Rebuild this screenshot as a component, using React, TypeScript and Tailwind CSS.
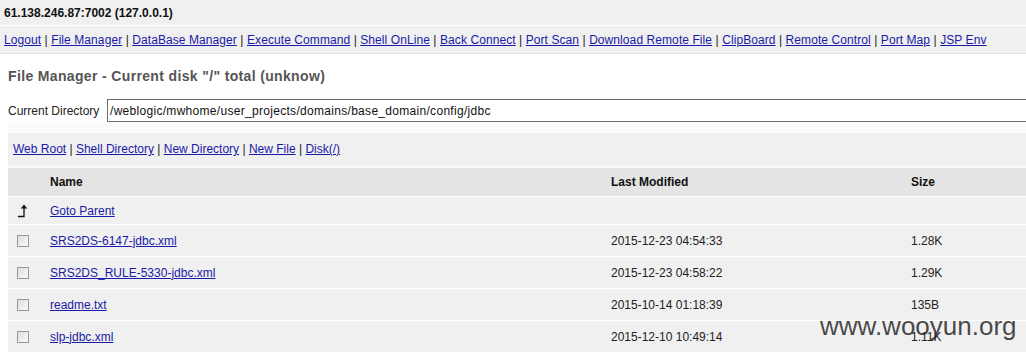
const navLinks = [
  "Logout",
  "File Manager",
  "DataBase Manager",
  "Execute Command",
  "Shell OnLine",
  "Back Connect",
  "Port Scan",
  "Download Remote File",
  "ClipBoard",
  "Remote Control",
  "Port Map",
  "JSP Env",
];

const actions = ["Web Root", "Shell Directory", "New Directory", "New File", "Disk(/)"];

const files = [
  { name: "SRS2DS-6147-jdbc.xml", modified: "2015-12-23 04:54:33", size: "1.28K" },
  { name: "SRS2DS_RULE-5330-jdbc.xml", modified: "2015-12-23 04:58:22", size: "1.29K" },
  { name: "readme.txt", modified: "2015-10-14 01:18:39", size: "135B" },
  { name: "slp-jdbc.xml", modified: "2015-12-10 10:49:14", size: "1.11K" },
];

function LinkBar({ items }: { items: string[] }) {
  return (
    <span>
      {items.map((label, i) => (
        <span key={label}>
          {i > 0 && <span className="text-[#222]"> | </span>}
          <a href="#" className="text-[#1a1aa6] underline">
            {label}
          </a>
        </span>
      ))}
    </span>
  );
}

function Checkbox() {
  return (
    <span className="block w-[12px] h-[12px] border border-[#9a9a9a] bg-gradient-to-br from-[#dedede] to-[#fafafa]" />
  );
}

function ParentIcon() {
  return (
    <svg width="12" height="14" viewBox="0 0 12 14" className="text-[#111]">
      <path d="M1 12.5H7V3" fill="none" stroke="currentColor" strokeWidth="1.3" />
      <path d="M7 0.5L3.8 4.5H10.2Z" fill="currentColor" />
    </svg>
  );
}

export default function App() {
  return (
    <div className="relative w-[1026px] h-[356px] overflow-hidden bg-white text-[12px] text-[#222] font-['Liberation_Sans',Arial,sans-serif]">
      {/* Host bar */}
      <div className="h-[26px] bg-[#f0f0f0] border-b border-white px-[4px] flex items-center font-bold text-[#111]">
        61.138.246.87:7002 (127.0.0.1)
      </div>

      {/* Main nav */}
      <div className="h-[28px] bg-[#f0f0f0] border-b border-[#e2e2e2] px-[4px] flex items-center whitespace-nowrap tracking-[0.08px]">
        <LinkBar items={navLinks} />
      </div>

      <div className="pl-[8px]">
        <div className="h-[45px] flex items-center text-[14px] tracking-[0.35px] font-bold text-[#555]">
          File Manager - Current disk "/" total (unknow)
        </div>

        <div className="h-[23px] flex items-center">
          <span className="w-[99px] shrink-0">Current Directory</span>
          <div className="h-[23px] w-[940px] shrink-0 border border-[#6e6e6e] flex items-center px-[2px] text-[#111] tracking-[0.3px]">
            /weblogic/mwhome/user_projects/domains/base_domain/config/jdbc
          </div>
        </div>

        <div className="h-[11px] bg-[#fbfbfb]" />

        <div className="h-[32px] bg-[#f0f0f0] px-[5px] flex items-center whitespace-nowrap">
          <LinkBar items={actions} />
        </div>

        <div className="h-[3px] bg-[#f6f6f6]" />

        {/* File table */}
        <div className="w-[1100px]">
          <div className="h-[28px] bg-[#e4e4e4] grid grid-cols-[42px_561px_300px_1fr] items-center font-bold text-[#111]">
            <span />
            <span>Name</span>
            <span>Last Modified</span>
            <span>Size</span>
          </div>

          <div className="h-[28px] border-t border-white bg-[#f0f0f0] grid grid-cols-[42px_561px_300px_1fr] items-center">
            <span className="pl-[9px] flex">
              <ParentIcon />
            </span>
            <a href="#" className="text-[#1a1aa6] underline justify-self-start">
              Goto Parent
            </a>
            <span />
            <span />
          </div>

          {files.map((f) => (
            <div
              key={f.name}
              className="h-[32px] border-t border-white bg-[#f0f0f0] grid grid-cols-[42px_561px_300px_1fr] items-center"
            >
              <span className="pl-[9px] flex">
                <Checkbox />
              </span>
              <a href="#" className="text-[#1a1aa6] underline justify-self-start">
                {f.name}
              </a>
              <span>{f.modified}</span>
              <span>{f.size}</span>
            </div>
          ))}
        </div>
      </div>

      {/* Watermark */}
      <div className="absolute left-[820px] top-[306px] text-[26px] leading-[40px] text-[#2a2a2a]/85 pointer-events-none">
        www.wooyun.org
      </div>
    </div>
  );
}
